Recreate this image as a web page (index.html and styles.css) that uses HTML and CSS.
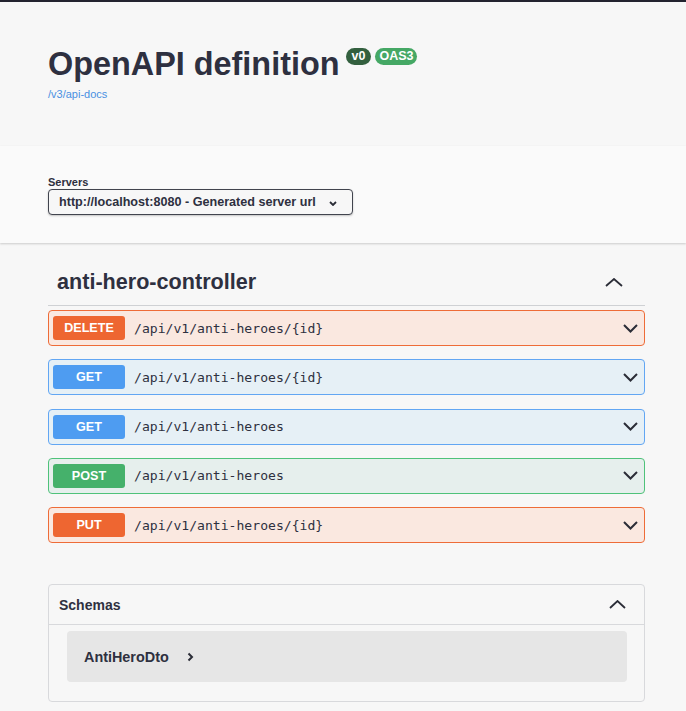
FILE: index.html
```html
<!DOCTYPE html>
<html lang="en">
<head>
<meta charset="utf-8">
<title>Swagger UI</title>
<link rel="stylesheet" href="styles.css">
</head>
<body>
<div class="topline"></div>
<section class="info">
  <div class="title-row">
    <h2 class="title">OpenAPI definition</h2>
    <span class="badges">
      <span class="badge badge-version">v0</span>
      <span class="badge badge-oas">OAS3</span>
    </span>
  </div>
  <a class="url" href="#">/v3/api-docs</a>
</section>
<section class="scheme">
  <div class="servers-label">Servers</div>
  <div class="select">
    <span class="select-text">http://localhost:8080 - Generated server url</span>
    <svg class="select-arrow" width="8" height="5" viewBox="0 0 8 5"><polyline points="1,1 4,4 7,1" fill="none" stroke="#2a2c36" stroke-width="1.8"/></svg>
  </div>
</section>
<main class="wrapper">
  <div class="tag-header">
    <h3 class="tag-name">anti-hero-controller</h3>
    <svg class="tag-arrow" width="18" height="9" viewBox="0 0 18 9"><polyline points="1,8 9,1 17,8" fill="none" stroke="#2b2d37" stroke-width="1.8"/></svg>
  </div>
  <div class="ops">
    <div class="op op-delete">
      <span class="method">DELETE</span>
      <span class="path">/api/v1/anti-heroes/{id}</span>
      <svg class="op-arrow" width="15" height="9" viewBox="0 0 15 9"><polyline points="1,1 7.5,7.5 14,1" fill="none" stroke="#2b2d37" stroke-width="2"/></svg>
    </div>
    <div class="op op-get">
      <span class="method">GET</span>
      <span class="path">/api/v1/anti-heroes/{id}</span>
      <svg class="op-arrow" width="15" height="9" viewBox="0 0 15 9"><polyline points="1,1 7.5,7.5 14,1" fill="none" stroke="#2b2d37" stroke-width="2"/></svg>
    </div>
    <div class="op op-get">
      <span class="method">GET</span>
      <span class="path">/api/v1/anti-heroes</span>
      <svg class="op-arrow" width="15" height="9" viewBox="0 0 15 9"><polyline points="1,1 7.5,7.5 14,1" fill="none" stroke="#2b2d37" stroke-width="2"/></svg>
    </div>
    <div class="op op-post">
      <span class="method">POST</span>
      <span class="path">/api/v1/anti-heroes</span>
      <svg class="op-arrow" width="15" height="9" viewBox="0 0 15 9"><polyline points="1,1 7.5,7.5 14,1" fill="none" stroke="#2b2d37" stroke-width="2"/></svg>
    </div>
    <div class="op op-put">
      <span class="method">PUT</span>
      <span class="path">/api/v1/anti-heroes/{id}</span>
      <svg class="op-arrow" width="15" height="9" viewBox="0 0 15 9"><polyline points="1,1 7.5,7.5 14,1" fill="none" stroke="#2b2d37" stroke-width="2"/></svg>
    </div>
  </div>
  <section class="models">
    <div class="models-header">
      <h4 class="models-title">Schemas</h4>
      <svg class="models-arrow" width="17" height="9" viewBox="0 0 17 9"><polyline points="1,8 8.5,1 16,8" fill="none" stroke="#2b2d37" stroke-width="1.8"/></svg>
    </div>
    <div class="model-box">
      <span class="model-name">AntiHeroDto</span>
      <svg class="model-arrow" width="7" height="10" viewBox="0 0 7 10"><polyline points="1.5,1.5 5,5 1.5,8.5" fill="none" stroke="#2b2d37" stroke-width="2"/></svg>
    </div>
  </section>
</main>
</body>
</html>
```
FILE: styles.css
```css
* { box-sizing: border-box; }

html, body {
  margin: 0;
  padding: 0;
  background: #f7f7f7;
  font-family: "Liberation Sans", Arial, sans-serif;
  color: #33364a;
}

.topline {
  height: 2px;
  background: #23232f;
}

.info {
  padding: 42px 48px 45px;
}

.title-row {
  display: flex;
  align-items: flex-start;
}

.title {
  margin: 0;
  font-size: 32.4px;
  line-height: 40px;
  font-weight: 700;
  color: #2e3040;
}

.badges {
  display: flex;
  gap: 4px;
  margin-left: 6px;
  margin-top: 4px;
}

.badge {
  display: inline-block;
  height: 17px;
  line-height: 17px;
  padding: 0 4px;
  border-radius: 10px;
  font-size: 12.5px;
  font-weight: 700;
  color: #fff;
}

.badge-version {
  background: #33603f;
  padding: 0 6px;
}

.badge-oas {
  background: #45a865;
}

.url {
  display: block;
  margin-top: 3px;
  font-size: 11px;
  line-height: 14px;
  color: #4990e2;
  text-decoration: none;
}

.scheme {
  background: #fafafa;
  box-shadow: 0 1px 2px 0 rgba(0, 0, 0, 0.18);
  padding: 30px 48px 28px;
}

.servers-label {
  font-size: 11px;
  line-height: 13px;
  font-weight: 700;
  color: #2e3040;
}

.select {
  display: flex;
  align-items: center;
  width: 305px;
  height: 26px;
  border: 1.5px solid #41444e;
  border-radius: 4px;
  background: #f7f7f7;
  box-shadow: 0 1px 2px 0 rgba(0, 0, 0, 0.22);
  padding: 0 10px;
}

.select-text {
  font-size: 12.6px;
  font-weight: 700;
  color: #2e3040;
}

.select-arrow {
  margin-left: 13px;
  margin-top: 2px;
}

.wrapper {
  padding: 16px 41px 0 48px;
}

.tag-header {
  display: flex;
  align-items: center;
  justify-content: space-between;
  padding: 10px 22px 10px 9px;
  border-bottom: 1px solid #cfd1d4;
}

.tag-name {
  margin: 0;
  font-size: 21.6px;
  line-height: 26px;
  font-weight: 700;
  color: #2e3040;
}

.ops {
  display: flex;
  flex-direction: column;
  gap: 13.3px;
  margin-top: 4px;
}

.op {
  display: flex;
  align-items: center;
  height: 36px;
  padding: 0 6px 0 4px;
  border: 1px solid;
  border-radius: 4px;
}

.method {
  width: 72px;
  height: 24px;
  line-height: 24px;
  text-align: center;
  border-radius: 3px;
  color: #fff;
  font-size: 12.6px;
  font-weight: 700;
  margin-right: 9px;
}

.path {
  font-family: "DejaVu Sans Mono", monospace;
  font-size: 13.1px;
  color: #2e3040;
}

.op-arrow {
  margin-left: auto;
}

.op-delete, .op-put {
  background: #fae8e0;
  border-color: #ee6c38;
}
.op-delete .method, .op-put .method {
  background: #ee6631;
}

.op-get {
  background: #e6f0f6;
  border-color: #62a6f3;
}
.op-get .method {
  background: #4e9cf1;
}

.op-post {
  background: #e6efed;
  border-color: #4fc27a;
}
.op-post .method {
  background: #45b16b;
}

.models {
  margin-top: 41px;
  border: 1px solid #d8d9dc;
  border-radius: 4px;
  padding-bottom: 19px;
}

.models-header {
  display: flex;
  align-items: center;
  justify-content: space-between;
  height: 40px;
  padding: 0 18px 0 10px;
  border-bottom: 1px solid #d8d9dc;
}

.models-title {
  margin: 0;
  font-size: 14px;
  font-weight: 700;
  color: #2e3040;
}

.model-box {
  display: flex;
  align-items: center;
  height: 51px;
  margin: 6px 17px 0 18px;
  padding-left: 17px;
  background: #e6e6e6;
  border-radius: 4px;
}

.model-name {
  font-size: 14.4px;
  font-weight: 700;
  color: #2e3040;
}

.model-arrow {
  margin-left: 18px;
  margin-top: 1px;
}
```
